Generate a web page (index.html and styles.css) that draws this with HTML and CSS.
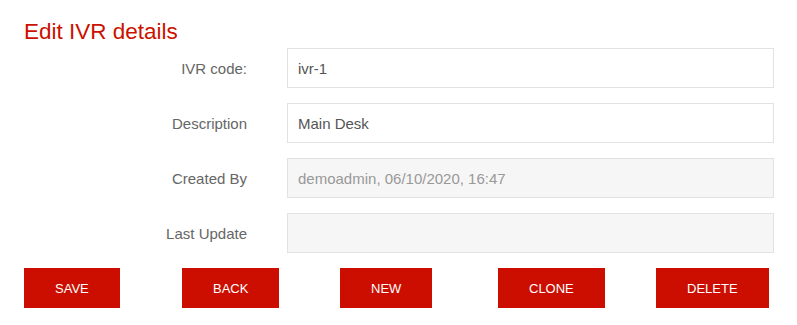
FILE: index.html
```html
<!DOCTYPE html>
<html lang="en">
<head>
    <meta charset="UTF-8">
    <meta name="viewport" content="width=device-width, initial-scale=1.0">
    <title>Edit IVR details</title>
    <link rel="stylesheet" href="styles.css">
</head>
<body>
    <div class="page">
        <h1>Edit IVR details</h1>

        <!-- IVR details form -->
        <form class="ivr-form">
            <label for="ivrCode">IVR code:</label>
            <input type="text" id="ivrCode" value="ivr-1">

            <label for="description">Description</label>
            <input type="text" id="description" value="Main Desk">

            <label for="createdBy">Created By</label>
            <input type="text" id="createdBy" value="demoadmin, 06/10/2020, 16:47" disabled>

            <label for="lastUpdate">Last Update</label>
            <input type="text" id="lastUpdate" value="" disabled>
        </form>

        <!-- Actions -->
        <div class="actions">
            <div><button type="button">SAVE</button></div>
            <div><button type="button">BACK</button></div>
            <div><button type="button">NEW</button></div>
            <div><button type="button">CLONE</button></div>
            <div><button type="button">DELETE</button></div>
        </div>
    </div>
</body>
</html>
```

FILE: styles.css
```css
body {
    font-family: "Liberation Sans", Arial, sans-serif;
    margin: 0;
    padding: 0;
    background-color: #fff;
}

.page {
    padding: 19px 23px 0 24px;
}

h1 {
    margin: 0 0 4px;
    font-size: 22.5px;
    line-height: 25px;
    font-weight: normal;
    color: #cc1100;
}

.ivr-form {
    display: grid;
    grid-template-columns: 223px 1fr;
    grid-auto-rows: 40px;
    column-gap: 40px;
    row-gap: 15px;
    align-items: center;
}

.ivr-form label {
    text-align: right;
    font-size: 15px;
    color: #666;
}

.ivr-form input {
    height: 40px;
    box-sizing: border-box;
    padding: 0 10px;
    border: 1px solid #e2e2e2;
    border-radius: 0;
    font-family: inherit;
    font-size: 15px;
    color: #555;
    background-color: #fff;
    outline: none;
}

.ivr-form input:disabled {
    background-color: #f6f6f6;
    color: #999;
}

.actions {
    display: grid;
    grid-template-columns: repeat(5, 158px);
    margin-top: 15px;
}

.actions button {
    height: 40px;
    padding: 0 31px;
    border: none;
    border-radius: 0;
    background-color: #cc0e00;
    color: #fff;
    font-family: inherit;
    font-size: 13px;
    cursor: pointer;
}

.actions button:hover {
    background-color: #b00c00;
}
```
